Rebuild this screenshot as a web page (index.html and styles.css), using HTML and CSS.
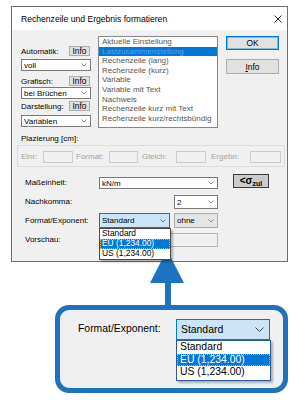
FILE: index.html
```html
<!DOCTYPE html>
<html>
<head>
<meta charset="utf-8">
<link rel="stylesheet" href="styles.css">
</head>
<body>
<div class="stage">
  <div class="dialog">
    <div class="titlebar">
      <span class="title">Rechenzeile und Ergebnis formatieren</span>
      <svg class="close" width="8" height="8" viewBox="0 0 8 8"><path d="M0.5 0.5 L7.5 7.5 M7.5 0.5 L0.5 7.5" stroke="#111" stroke-width="0.9" fill="none"/></svg>
    </div>
    <div class="client">
      <div class="top">
        <div class="leftcol">
          <div class="lrow r1"><span>Automatik:</span><span class="btn sbtn">Info</span></div>
          <div class="combo c1"><span>voll</span><svg class="chev" width="6" height="4" viewBox="0 0 6 4"><path d="M0.5 0.5 L3 3 L5.5 0.5" stroke="#777" fill="none" stroke-width="0.8"/></svg></div>
          <div class="lrow r2"><span>Grafisch:</span><span class="btn sbtn">Info</span></div>
          <div class="combo c2"><span>bei Brüchen</span><svg class="chev" width="6" height="4" viewBox="0 0 6 4"><path d="M0.5 0.5 L3 3 L5.5 0.5" stroke="#777" fill="none" stroke-width="0.8"/></svg></div>
          <div class="lrow r3"><span>Darstellung:</span><span class="btn sbtn">Info</span></div>
          <div class="combo c3"><span>Variablen</span><svg class="chev" width="6" height="4" viewBox="0 0 6 4"><path d="M0.5 0.5 L3 3 L5.5 0.5" stroke="#777" fill="none" stroke-width="0.8"/></svg></div>
        </div>
        <div class="listbox">
          <div class="item">Aktuelle Einstellung</div>
          <div class="item sel">Lastzusammenstellung</div>
          <div class="item">Rechenzeile (lang)</div>
          <div class="item">Rechenzeile (kurz)</div>
          <div class="item">Variable</div>
          <div class="item">Variable mit Text</div>
          <div class="item">Nachweis</div>
          <div class="item">Rechenzeile kurz mit Text</div>
          <div class="item">Rechenzeile kurz/rechtsbündig</div>
        </div>
        <div class="rightcol">
          <div class="btn bigbtn okbtn">OK</div>
          <div class="btn bigbtn infobtn"><u>I</u>nfo</div>
        </div>
      </div>
      <div class="plz">Plazierung [cm]:</div>
      <div class="group">
        <span class="gl gl1">Einr:</span><span class="dis w30"></span>
        <span class="gl gl2">Format:</span><span class="dis w29"></span>
        <span class="gl gl3">Gleich:</span><span class="dis w30"></span>
        <span class="gl gl4">Ergebn:</span><span class="dis w31"></span>
      </div>
      <div class="row row1">
        <span class="lbl">Maßeinheit:</span>
        <div class="combo unit"><span>kN/m</span><svg class="chev" width="6" height="4" viewBox="0 0 6 4"><path d="M0.5 0.5 L3 3 L5.5 0.5" stroke="#777" fill="none" stroke-width="0.8"/></svg></div>
        <div class="sigma">&lt;σ<sub>zul</sub></div>
      </div>
      <div class="row row2">
        <span class="lbl">Nachkomma:</span>
        <div class="combo nk"><span>2</span><svg class="chev" width="6" height="4" viewBox="0 0 6 4"><path d="M0.5 0.5 L3 3 L5.5 0.5" stroke="#777" fill="none" stroke-width="0.8"/></svg></div>
      </div>
      <div class="row row3">
        <span class="lbl">Format/Exponent:</span>
        <div class="combo std open">
          <span>Standard</span><svg class="chev" width="6" height="4" viewBox="0 0 6 4"><path d="M0.5 0.5 L3 3 L5.5 0.5" stroke="#555" fill="none" stroke-width="0.8"/></svg>
          <div class="droplist small">
            <div class="opt">Standard</div>
            <div class="opt hl">EU (1,234.00)</div>
            <div class="opt">US (1,234.00)</div>
          </div>
        </div>
        <div class="combo ohne"><span>ohne</span><svg class="chev" width="6" height="4" viewBox="0 0 6 4"><path d="M0.5 0.5 L3 3 L5.5 0.5" stroke="#777" fill="none" stroke-width="0.8"/></svg></div>
      </div>
      <div class="row row4">
        <span class="lbl">Vorschau:</span>
        <div class="preview"></div>
      </div>
    </div>
  </div>

  <svg class="arrow" width="38" height="62" viewBox="0 0 38 62">
    <polygon points="19,2 2,35 36,35" fill="#1e72c0"/>
    <rect x="17" y="34" width="6" height="28" fill="#1e72c0"/>
  </svg>

  <div class="callout">
    <span class="clbl">Format/Exponent:</span>
    <div class="bigcombo">
      <span>Standard</span>
      <svg width="9" height="5" viewBox="0 0 9 5"><path d="M0.5 0.5 L4.5 4.5 L8.5 0.5" stroke="#444" fill="none" stroke-width="1"/></svg>
      <div class="droplist big">
        <div class="opt">Standard</div>
        <div class="opt hl">EU (1,234.00)</div>
        <div class="opt">US (1,234.00)</div>
      </div>
    </div>
  </div>
</div>
</body>
</html>
```
FILE: styles.css
```css
body {
  margin: 0;
  background: #fff;
  font-family: "Liberation Sans", Arial, sans-serif;
  color: #000;
}
.stage {
  position: relative;
  width: 300px;
  height: 400px;
  overflow: hidden;
}
.dialog {
  margin: 6px 0 0 11px;
  width: 277px;
  height: 256px;
  box-sizing: border-box;
  border: 1px solid #6e6e6e;
  background: #f0f0f0;
  display: flex;
  flex-direction: column;
}
.titlebar {
  height: 23px;
  background: #fff;
  display: flex;
  align-items: center;
  justify-content: space-between;
  padding: 0 5px 0 9px;
  font-size: 8.6px;
  flex: none;
}
.client {
  flex: 1;
  font-size: 8px;
  display: flex;
  flex-direction: column;
}
.top {
  display: flex;
  margin: 6px 0 0 9px;
  height: 92px;
}
.leftcol {
  width: 70px;
  display: flex;
  flex-direction: column;
}
.lrow {
  display: flex;
  justify-content: space-between;
  align-items: center;
  height: 10px;
}
.r1 { margin-top: 10px; }
.r2 { margin-top: 5px; }
.r3 { margin-top: 2px; }
.c1 { margin-top: 3px; }
.c2 { margin-top: 1px; }
.c3 { margin-top: 4px; }
.btn {
  box-sizing: border-box;
  background: #e1e1e1;
  border: 1px solid #adadad;
  display: flex;
  align-items: center;
  justify-content: center;
}
.sbtn {
  width: 21px;
  height: 10px;
  margin-right: 1px;
  font-size: 8.4px;
}
.combo {
  box-sizing: border-box;
  height: 12px;
  border: 1px solid #7a7a7a;
  background: #fff;
  display: flex;
  align-items: center;
  justify-content: space-between;
  padding: 0 3px 0 2px;
  flex: none;
}
.listbox {
  margin-left: 7px;
  width: 120px;
  height: 92px;
  box-sizing: border-box;
  border: 1px solid #828790;
  background: #fff;
  color: #555;
}
.item {
  height: 9.6px;
  line-height: 9.6px;
  padding-left: 3px;
  white-space: nowrap;
}
.item.sel {
  background: #0078d7;
  color: #5ea4e4;
}
.rightcol {
  margin-left: 8px;
  width: 53px;
  display: flex;
  flex-direction: column;
}
.bigbtn {
  font-size: 8.4px;
}
.okbtn {
  height: 14px;
  border-color: #0078d7;
  box-shadow: inset 0 0 0 1px #7eb4ea;
}
.infobtn {
  height: 15px;
  margin-top: 9px;
}
.plz {
  margin: 6px 0 0 9px;
  height: 10px;
  line-height: 10px;
}
.group {
  margin: 1px 0 0 5px;
  width: 268px;
  height: 22px;
  box-sizing: border-box;
  border: 1px solid #dcdcdc;
  display: flex;
  align-items: center;
  padding-left: 3px;
  padding-top: 1px;
  color: #a3a3a3;
}
.gl { box-sizing: border-box; white-space: nowrap; }
.gl1 { width: 22px; }
.gl2 { width: 36px; padding-left: 3px; }
.gl3 { width: 38px; padding-left: 4px; }
.gl4 { width: 44px; padding-left: 5px; }
.dis {
  box-sizing: border-box;
  height: 12px;
  border: 1px solid #cccccc;
  background: #f0f0f0;
}
.w29 { width: 29px; }
.w30 { width: 30px; }
.w31 { width: 31px; }
.row {
  display: flex;
  margin-left: 13px;
}
.lbl {
  width: 74px;
  flex: none;
}
.row1 {
  margin-top: 7px;
  height: 15px;
}
.row1 .lbl {
  align-self: flex-end;
  line-height: 12px;
}
.unit {
  width: 119px;
  align-self: flex-end;
}
.sigma {
  margin-left: 15px;
  width: 36px;
  height: 14px;
  box-sizing: border-box;
  background: #cbcbcb;
  border: 1px solid #3c3c3c;
  font-size: 10px;
  font-weight: bold;
  line-height: 12px;
  text-align: center;
}
.sigma sub {
  font-size: 7px;
  vertical-align: -2px;
  line-height: 0;
}
.row2 {
  margin-top: 6px;
  height: 14px;
}
.row2 .lbl { line-height: 14px; }
.nk {
  margin-left: 75px;
  width: 44px;
  height: 14px;
}
.row3 {
  margin-top: 4px;
  height: 15px;
}
.row3 .lbl { line-height: 15px; }
.std {
  position: relative;
  width: 71px;
  height: 15px;
  background: #cce4f7;
  border-color: #0078d7;
}
.ohne {
  margin-left: 4px;
  width: 44px;
  height: 15px;
  background: #e5e5e5;
  border-color: #adadad;
}
.row4 {
  margin-top: 5px;
  height: 14px;
}
.row4 .lbl { line-height: 14px; }
.preview {
  margin-left: 71px;
  width: 48px;
  height: 14px;
  box-sizing: border-box;
  border: 1px solid #b4b4b4;
  background: #f0f0f0;
}
.droplist {
  position: absolute;
  left: -1px;
  background: #fff;
  box-sizing: border-box;
  box-shadow: 2px 2px 2px rgba(0, 0, 0, 0.28);
  z-index: 2;
}
.droplist.small {
  top: 14px;
  width: 72px;
  height: 32px;
  border: 1px solid #4a4a4a;
  font-size: 8.4px;
}
.droplist.small .opt {
  height: 9.8px;
  line-height: 9.8px;
  padding-left: 2px;
  white-space: nowrap;
}
.opt.hl {
  background: #0078d7;
  color: #fff;
  outline: 1px dotted #f5a54a;
  outline-offset: -1px;
}
.arrow {
  position: absolute;
  left: 148px;
  top: 248px;
}
.callout {
  margin: 43px 0 0 55px;
  width: 233px;
  height: 88px;
  box-sizing: border-box;
  border: 5px solid #1e72c0;
  border-radius: 14px;
  background: #f0f0f0;
  display: flex;
  padding: 9px 0 0 18px;
  font-size: 10.4px;
}
.clbl {
  width: 98px;
  flex: none;
  line-height: 19px;
}
.bigcombo {
  position: relative;
  width: 94px;
  height: 21px;
  box-sizing: border-box;
  border: 1px solid #0078d7;
  background: #cce4f7;
  display: flex;
  align-items: center;
  justify-content: space-between;
  padding: 0 5px 0 4px;
}
.droplist.big {
  top: 20px;
  width: 95px;
  height: 41px;
  border: 1px solid #2a5c9c;
}
.droplist.big .opt {
  height: 12.6px;
  line-height: 12.6px;
  padding-left: 3px;
  white-space: nowrap;
}
```
